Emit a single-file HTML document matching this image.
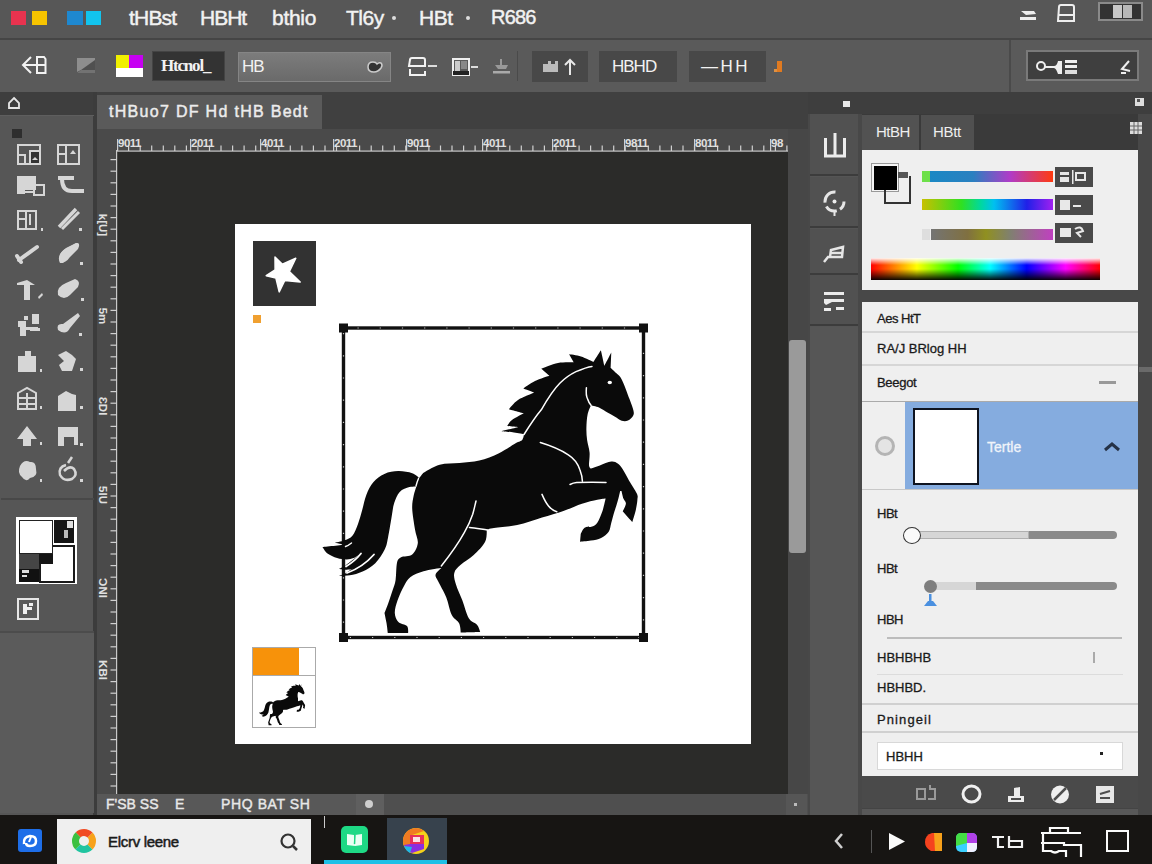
<!DOCTYPE html>
<html><head><meta charset="utf-8">
<style>
*{margin:0;padding:0;box-sizing:border-box}
html,body{width:1152px;height:864px;overflow:hidden;background:#2b2b29;font-family:"Liberation Sans",sans-serif}
.a{position:absolute}
.t{position:absolute;white-space:nowrap;color:#f2f2f2;font-weight:bold}
</style></head><body>
<!-- menu bar -->
<div class="a" style="left:0;top:0;width:1152px;height:39px;background:#575757"></div>
<div class="a" style="left:0;top:38px;width:1152px;height:2px;background:#454545"></div>
<!-- options bar -->
<div class="a" style="left:0;top:40px;width:1152px;height:52px;background:#5a5a5a"></div>

<!-- MENU CONTENT -->
<div class="a" style="left:11px;top:11px;width:15px;height:14px;background:#e8334f"></div>
<div class="a" style="left:32px;top:11px;width:15px;height:14px;background:#f7c400"></div>
<div class="a" style="left:67px;top:11px;width:16px;height:14px;background:#1e88d0"></div>
<div class="a" style="left:86px;top:11px;width:15px;height:14px;background:#12c4ee"></div>
<div class="t" style="left:129px;top:6px;font-size:21px;font-weight:normal;-webkit-text-stroke:0.45px #f2f2f2;letter-spacing:-0.8px">tHBst</div>
<div class="t" style="left:200px;top:6px;font-size:21px;font-weight:normal;-webkit-text-stroke:0.45px #f2f2f2;letter-spacing:-1px">HBHt</div>
<div class="t" style="left:272px;top:6px;font-size:21px;font-weight:normal;-webkit-text-stroke:0.45px #f2f2f2;letter-spacing:-0.3px">bthio</div>
<div class="t" style="left:346px;top:6px;font-size:21px;font-weight:normal;-webkit-text-stroke:0.45px #f2f2f2;letter-spacing:-0.5px">Tl6y</div>
<div class="a" style="left:392px;top:16px;width:4px;height:4px;background:#ddd;border-radius:2px"></div>
<div class="t" style="left:419px;top:6px;font-size:21px;font-weight:normal;-webkit-text-stroke:0.45px #f2f2f2;letter-spacing:-0.5px">HBt</div>
<div class="a" style="left:466px;top:16px;width:4px;height:4px;background:#ddd;border-radius:2px"></div>
<div class="t" style="left:491px;top:6px;font-size:20px;font-weight:normal;-webkit-text-stroke:0.45px #f2f2f2;letter-spacing:-0.8px">R686</div>
<svg class="a" style="left:1018px;top:7px" width="22" height="16"><path d="M3 4 L16 4 L18 7 L8 8 Z" fill="#eee"/><rect x="2" y="10" width="16" height="3" fill="#eee"/></svg>
<svg class="a" style="left:1055px;top:3px" width="24" height="20"><path d="M4 4 Q4 2 6 2 L17 2 Q19 2 19 4 L19 18 L3 18 Z" fill="none" stroke="#eee" stroke-width="2"/><rect x="4" y="11" width="15" height="2" fill="#eee"/></svg>
<div class="a" style="left:1098px;top:2px;width:45px;height:19px;border:2px solid #8a8a8a;background:#333"></div>
<div class="a" style="left:1113px;top:5px;width:9px;height:13px;background:#c8c8c8"></div>
<div class="a" style="left:1123px;top:5px;width:9px;height:13px;background:#b8b8b8"></div>
<!-- OPTIONS CONTENT -->
<svg class="a" style="left:18px;top:54px" width="32" height="22"><path d="M13 3 L5 11 L13 19 M5 11 L27 11" fill="none" stroke="#f2f2f2" stroke-width="2"/><path d="M19 3 L26 3 L27.5 5 L27.5 19 L19 19 Z" fill="none" stroke="#f2f2f2" stroke-width="2"/></svg>
<svg class="a" style="left:74px;top:56px" width="24" height="20"><rect x="3" y="2" width="18" height="15" fill="#505050"/><path d="M3 2 L21 2 L21 4 L7 14 L3 16 Z" fill="#8e8e8e"/><path d="M7 14 L21 14 L21 17 L3 17 Z" fill="#727272"/></svg>
<div class="a" style="left:116px;top:55px;width:13px;height:13px;background:#f0f000"></div>
<div class="a" style="left:129px;top:55px;width:14px;height:13px;background:#c600f2"></div>
<div class="a" style="left:116px;top:68px;width:27px;height:9px;background:#fff"></div>
<div class="a" style="left:152px;top:51px;width:73px;height:30px;background:#333;border:1px solid #444"></div>
<div class="t" style="left:161px;top:56px;font-size:17px;letter-spacing:-1.2px;font-family:'Liberation Serif',serif">Htcnol_</div>
<div class="a" style="left:238px;top:52px;width:153px;height:30px;background:linear-gradient(180deg,#7c7c7c,#6a6a6a);border:1px solid #858585"></div>
<div class="t" style="left:242px;top:57px;font-size:17px;font-weight:normal;letter-spacing:-1px">HB</div>
<svg class="a" style="left:365px;top:58px" width="20" height="18"><path d="M3 9 Q3 4 8 4 Q11 4 12 6 Q14 4 16 5 Q18 7 16 10 Q13 14 9 14 Q3 14 3 9 Z" fill="#333" stroke="#ccc" stroke-width="1.5"/></svg>
<svg class="a" style="left:406px;top:55px" width="34" height="24"><path d="M4 5 Q4 3 6 3 L17 3 Q19 3 19 5 L19 11 L3 11 Z" fill="none" stroke="#f2f2f2" stroke-width="2"/><path d="M4 14 L4 20 L19 20 L19 16" fill="none" stroke="#f2f2f2" stroke-width="2"/><rect x="22" y="10" width="9" height="2" fill="#ddd"/></svg>
<svg class="a" style="left:451px;top:57px" width="30" height="22"><rect x="2" y="2" width="16" height="16" fill="none" stroke="#eee" stroke-width="2"/><rect x="4" y="4" width="5" height="10" fill="#ccc"/><rect x="10" y="4" width="6" height="8" fill="#888"/><rect x="2" y="14" width="16" height="4" fill="#222"/><rect x="20" y="9" width="7" height="2" fill="#ddd"/></svg>
<svg class="a" style="left:490px;top:57px" width="24" height="20"><path d="M10 2 L10 8 L5 8 L8 12 L16 12 L18 8 L12 8 L12 2 Z" fill="#999"/><rect x="3" y="14" width="17" height="2.5" fill="#aaa"/></svg>
<div class="a" style="left:517px;top:51px;width:1px;height:30px;background:#4a4a4a"></div>
<div class="a" style="left:532px;top:51px;width:56px;height:31px;background:#484848"></div>
<svg class="a" style="left:540px;top:56px" width="44" height="22"><path d="M3 8 L8 8 L8 5 L11 5 L11 8 L15 8 L15 5 L18 5 L18 16 L3 16 Z" fill="#bbb"/><path d="M30 4 L30 19 M25 9 L30 4 L35 9" fill="none" stroke="#e8e8e8" stroke-width="2"/></svg>
<div class="a" style="left:599px;top:51px;width:78px;height:31px;background:#484848"></div>
<div class="t" style="left:612px;top:57px;font-size:17px;font-weight:normal;letter-spacing:-1px">HBHD</div>
<div class="a" style="left:689px;top:51px;width:77px;height:31px;background:#484848"></div>
<div class="t" style="left:701px;top:57px;font-size:17px;font-weight:normal;letter-spacing:2.5px">&#8212;HH</div>
<svg class="a" style="left:772px;top:58px" width="14" height="18"><rect x="5" y="3" width="5" height="11" fill="#e07a20"/><rect x="2" y="11" width="3" height="3" fill="#e09040"/></svg>
<div class="a" style="left:1009px;top:40px;width:2px;height:52px;background:#4a4a4a"></div>
<div class="a" style="left:1026px;top:50px;width:113px;height:31px;background:#3f3f3f;border:2px solid #7a7a7a"></div>
<svg class="a" style="left:1034px;top:56px" width="50" height="22"><circle cx="7" cy="10" r="4" fill="none" stroke="#eee" stroke-width="2"/><path d="M11 10 L20 10 Q23 10 24 5 L28 5 L28 18 L24 18 Q22 12 20 12 L11 12" fill="#eee"/><rect x="31" y="4" width="12" height="3" fill="#eee"/><rect x="31" y="9" width="12" height="3" fill="#eee"/><rect x="31" y="14" width="12" height="4" fill="#ddd"/></svg>
<svg class="a" style="left:1117px;top:58px" width="16" height="18"><path d="M12 3 L5 11 L13 13 M4 15 L9 15" fill="none" stroke="#eee" stroke-width="2"/></svg>
<!-- dark strip under options -->
<div class="a" style="left:0;top:92px;width:1152px;height:23px;background:#3e3e3e"></div>
<!-- left tool panel -->
<div class="a" style="left:0;top:115px;width:94px;height:700px;background:#565656"></div>
<div class="a" style="left:93px;top:92px;width:4px;height:723px;background:#3c3c3c"></div>
<div class="a" style="left:97px;top:92px;width:711px;height:37px;background:#404040"></div>

<!-- LEFT PANEL CONTENT -->
<svg class="a" style="left:6px;top:96px" width="16" height="16"><path d="M8 2 L13 7 L13 12 L3 12 L3 7 Z" fill="none" stroke="#e6e6e6" stroke-width="1.8"/></svg>
<div class="a" style="left:0;top:115px;width:94px;height:1px;background:#5e5e5e"></div>
<div class="a" style="left:12px;top:129px;width:10px;height:9px;background:#2e2e2e"></div>
<svg class="a" style="left:0;top:115px" width="94" height="385">
<g fill="none" stroke="#d6d6d6" stroke-width="2">
 <rect x="18" y="30" width="22" height="19"/><rect x="30" y="36" width="10" height="13" fill="#333"/><path d="M18 40 L25 40 L25 49"/>
 <rect x="58" y="30" width="21" height="19"/><path d="M58 39 L66 39 M66 30 L66 49"/>
</g>
<path d="M35 42 L38 45 L32 45 Z" fill="#d6d6d6"/><path d="M73 35 L76 39 L70 39 Z" fill="#d6d6d6"/>
<g fill="#d6d6d6">
 <rect x="17" y="61" width="19" height="14"/><rect x="17" y="73" width="8" height="6"/>
</g>
<g fill="none" stroke="#d6d6d6" stroke-width="2">
 <rect x="34" y="70" width="10" height="10"/><path d="M24 77 L34 77"/>
 <path d="M58 63 L74 63 M62 64 Q62 76 72 76 L84 76" stroke-width="4"/>
</g>
<g fill="none" stroke="#d6d6d6" stroke-width="2">
 <rect x="18" y="96" width="18" height="18"/><path d="M18 104 L26 104 M26 96 L26 114 M30 99 L30 110"/>
 <path d="M59 112 L76 94" stroke-width="3.5"/><path d="M62 114 L79 97" stroke-width="3"/>
</g>
<rect x="41" y="113" width="2" height="3" fill="#d6d6d6"/><rect x="79" y="113" width="3" height="3" fill="#d6d6d6"/>
<g fill="none" stroke="#d6d6d6" stroke-width="4" stroke-linecap="round">
 <path d="M19 145 L37 132"/><path d="M17 141 L21 147"/>
 <path d="M62 146 Q60 140 66 136 L77 130"/>
</g>
<path d="M60 148 Q56 140 66 133 L76 128 Q81 128 78 134 L70 142 Q66 148 60 148 Z" fill="#d6d6d6"/>
<rect x="80" y="147" width="3" height="3" fill="#d6d6d6"/>
<g fill="#d6d6d6">
 <path d="M17 168 L27 165 L35 170 L30 170 L30 185 L24 185 L24 170 L17 170 Z"/>
 <path d="M58 180 Q56 172 66 168 L75 164 Q81 166 78 172 L70 180 Q64 186 58 180 Z"/>
 <path d="M38 182 L42 178 L43 180 L39 184 Z"/>
 <rect x="81" y="183" width="3" height="3"/>
</g>
<g fill="#d6d6d6">
 <rect x="18" y="206" width="8" height="6"/><rect x="24" y="201" width="4" height="4"/><rect x="32" y="199" width="7" height="10"/><rect x="20" y="212" width="18" height="3"/><rect x="20" y="215" width="6" height="6"/><rect x="30" y="213" width="10" height="3"/>
 <path d="M58 215 Q56 208 63 209 L78 198 L80 201 L70 213 Q66 221 58 215 Z"/><rect x="79" y="218" width="3" height="3"/>
</g>
<g fill="#d6d6d6">
 <rect x="18" y="241" width="18" height="16"/><rect x="25" y="236" width="6" height="5"/><rect x="40" y="254" width="2" height="3"/>
 <path d="M58 240 L66 236 L72 240 L76 244 L72 256 L62 256 L59 250 L64 246 Z"/><rect x="80" y="253" width="3" height="3"/>
</g>
<g fill="none" stroke="#d6d6d6" stroke-width="2">
 <path d="M18 278 L18 294 L36 294 L36 278 L27 273 Z M18 283 L36 283 M18 289 L36 289 M27 278 L27 294"/>
</g>
<g fill="#d6d6d6">
 <path d="M58 281 L66 276 L72 279 L76 280 L76 296 L58 296 Z"/><rect x="40" y="291" width="2" height="3"/><rect x="80" y="291" width="3" height="3"/>
 <path d="M17 324 L27 311 L37 324 L31 324 L31 331 L23 331 L23 324 Z"/><rect x="40" y="327" width="2" height="3"/>
 <path d="M58 312 L78 312 L78 330 L74 330 L74 322 L64 322 L64 331 L58 331 Z"/><rect x="80" y="328" width="3" height="3"/>
 <path d="M20 351 Q24 344 30 347 Q36 346 36 354 Q38 362 30 363 Q26 368 22 362 Q17 358 20 351 Z"/><rect x="40" y="364" width="2" height="3"/>
</g>
<g fill="none" stroke="#d6d6d6" stroke-width="2.5">
 <path d="M66 350 Q58 352 60 360 Q64 367 72 364 Q78 360 74 354 Q70 350 64 356"/><path d="M68 348 L72 342"/>
</g>
<rect x="80" y="364" width="3" height="3" fill="#d6d6d6"/>
</svg>
<div class="a" style="left:1px;top:498px;width:93px;height:2px;background:#484848"></div>
<div class="a" style="left:16px;top:517px;width:61px;height:67px;background:#fff"></div>
<div class="a" style="left:39px;top:545px;width:36px;height:38px;border:2px solid #1a1a1a;background:#fff"></div>
<div class="a" style="left:19px;top:520px;width:34px;height:34px;background:#fff;border:1.5px solid #222"></div>
<div class="a" style="left:54px;top:520px;width:20px;height:23px;background:#151515"></div>
<div class="a" style="left:67px;top:521px;width:6px;height:7px;background:#ddd"></div>
<div class="a" style="left:64px;top:530px;width:4px;height:8px;background:#bbb"></div>
<div class="a" style="left:19px;top:554px;width:20px;height:15px;background:#454545"></div>
<div class="a" style="left:19px;top:569px;width:20px;height:13px;background:#111"></div>
<div class="a" style="left:22px;top:570px;width:7px;height:3px;background:#ddd"></div>
<div class="a" style="left:22px;top:575px;width:5px;height:2px;background:#ddd"></div>
<div class="a" style="left:39px;top:554px;width:14px;height:10px;background:#151515"></div>
<div class="a" style="left:17px;top:598px;width:22px;height:22px;border:2px solid #e6e6e6;background:#5a5a5a"></div>
<svg class="a" style="left:17px;top:598px" width="22" height="22"><path d="M6 6 L10 6 L10 9 L15 9 L15 12 L10 12 L10 16 L6 16 Z M12 5 L16 5 L16 8 L12 8 Z" fill="#f0f0f0"/></svg>
<div class="a" style="left:0;top:631px;width:94px;height:2px;background:#4c4c4c"></div>
<div class="a" style="left:0;top:633px;width:94px;height:180px;background:#5b5b5b"></div>
<!-- document tab -->
<div class="a" style="left:97px;top:95px;width:225px;height:34px;background:#5a5a5a"></div>
<div class="t" style="left:109px;top:103px;font-size:16px;letter-spacing:1.3px;color:#ececec;font-weight:normal;-webkit-text-stroke:0.45px #ececec">tHBuo7 DF Hd tHB Bedt</div>
<!-- ruler -->
<div class="a" style="left:97px;top:129px;width:708px;height:22px;background:#4a4a4a"></div>
<div class="a" style="left:97px;top:129px;width:20px;height:665px;background:#4a4a4a"></div>
<!-- canvas -->
<div class="a" style="left:117px;top:151px;width:671px;height:643px;background:#2b2b29"></div>
<svg class="a" style="left:0;top:0" width="1152" height="864">
<rect x="116" y="150.5" width="672" height="1.2" fill="#c8c8c8"/>
<rect x="116" y="150" width="1.2" height="644" fill="#c8c8c8"/>
<rect x="110.5" y="159.0" width="6.5" height="1.2" fill="#d0d0d0"/>
<rect x="110.5" y="170.6" width="6.5" height="1.2" fill="#d0d0d0"/>
<rect x="110.5" y="182.2" width="6.5" height="1.2" fill="#d0d0d0"/>
<rect x="110.5" y="193.8" width="6.5" height="1.2" fill="#d0d0d0"/>
<rect x="110.5" y="205.4" width="6.5" height="1.2" fill="#d0d0d0"/>
<rect x="110.5" y="217.0" width="6.5" height="1.2" fill="#d0d0d0"/>
<rect x="110.5" y="228.6" width="6.5" height="1.2" fill="#d0d0d0"/>
<rect x="110.5" y="240.2" width="6.5" height="1.2" fill="#d0d0d0"/>
<rect x="110.5" y="251.8" width="6.5" height="1.2" fill="#d0d0d0"/>
<rect x="110.5" y="263.4" width="6.5" height="1.2" fill="#d0d0d0"/>
<rect x="110.5" y="275.0" width="6.5" height="1.2" fill="#d0d0d0"/>
<rect x="110.5" y="286.6" width="6.5" height="1.2" fill="#d0d0d0"/>
<rect x="110.5" y="298.2" width="6.5" height="1.2" fill="#d0d0d0"/>
<rect x="110.5" y="309.8" width="6.5" height="1.2" fill="#d0d0d0"/>
<rect x="110.5" y="321.4" width="6.5" height="1.2" fill="#d0d0d0"/>
<rect x="110.5" y="333.0" width="6.5" height="1.2" fill="#d0d0d0"/>
<rect x="110.5" y="344.6" width="6.5" height="1.2" fill="#d0d0d0"/>
<rect x="110.5" y="356.2" width="6.5" height="1.2" fill="#d0d0d0"/>
<rect x="110.5" y="367.8" width="6.5" height="1.2" fill="#d0d0d0"/>
<rect x="110.5" y="379.4" width="6.5" height="1.2" fill="#d0d0d0"/>
<rect x="110.5" y="391.0" width="6.5" height="1.2" fill="#d0d0d0"/>
<rect x="110.5" y="402.6" width="6.5" height="1.2" fill="#d0d0d0"/>
<rect x="110.5" y="414.2" width="6.5" height="1.2" fill="#d0d0d0"/>
<rect x="110.5" y="425.8" width="6.5" height="1.2" fill="#d0d0d0"/>
<rect x="110.5" y="437.4" width="6.5" height="1.2" fill="#d0d0d0"/>
<rect x="110.5" y="449.0" width="6.5" height="1.2" fill="#d0d0d0"/>
<rect x="110.5" y="460.6" width="6.5" height="1.2" fill="#d0d0d0"/>
<rect x="110.5" y="472.2" width="6.5" height="1.2" fill="#d0d0d0"/>
<rect x="110.5" y="483.8" width="6.5" height="1.2" fill="#d0d0d0"/>
<rect x="110.5" y="495.4" width="6.5" height="1.2" fill="#d0d0d0"/>
<rect x="110.5" y="507.0" width="6.5" height="1.2" fill="#d0d0d0"/>
<rect x="110.5" y="518.6" width="6.5" height="1.2" fill="#d0d0d0"/>
<rect x="110.5" y="530.2" width="6.5" height="1.2" fill="#d0d0d0"/>
<rect x="110.5" y="541.8" width="6.5" height="1.2" fill="#d0d0d0"/>
<rect x="110.5" y="553.4" width="6.5" height="1.2" fill="#d0d0d0"/>
<rect x="110.5" y="565.0" width="6.5" height="1.2" fill="#d0d0d0"/>
<rect x="110.5" y="576.6" width="6.5" height="1.2" fill="#d0d0d0"/>
<rect x="110.5" y="588.2" width="6.5" height="1.2" fill="#d0d0d0"/>
<rect x="110.5" y="599.8" width="6.5" height="1.2" fill="#d0d0d0"/>
<rect x="110.5" y="611.4" width="6.5" height="1.2" fill="#d0d0d0"/>
<rect x="110.5" y="623.0" width="6.5" height="1.2" fill="#d0d0d0"/>
<rect x="110.5" y="634.6" width="6.5" height="1.2" fill="#d0d0d0"/>
<rect x="110.5" y="646.2" width="6.5" height="1.2" fill="#d0d0d0"/>
<rect x="110.5" y="657.8" width="6.5" height="1.2" fill="#d0d0d0"/>
<rect x="110.5" y="669.4" width="6.5" height="1.2" fill="#d0d0d0"/>
<rect x="110.5" y="681.0" width="6.5" height="1.2" fill="#d0d0d0"/>
<rect x="110.5" y="692.6" width="6.5" height="1.2" fill="#d0d0d0"/>
<rect x="110.5" y="704.2" width="6.5" height="1.2" fill="#d0d0d0"/>
<rect x="110.5" y="715.8" width="6.5" height="1.2" fill="#d0d0d0"/>
<rect x="110.5" y="727.4" width="6.5" height="1.2" fill="#d0d0d0"/>
<rect x="110.5" y="739.0" width="6.5" height="1.2" fill="#d0d0d0"/>
<rect x="110.5" y="750.6" width="6.5" height="1.2" fill="#d0d0d0"/>
<rect x="110.5" y="762.2" width="6.5" height="1.2" fill="#d0d0d0"/>
<rect x="110.5" y="773.8" width="6.5" height="1.2" fill="#d0d0d0"/>
<rect x="110.5" y="785.4" width="6.5" height="1.2" fill="#d0d0d0"/>
<text transform="translate(99,225) rotate(90)" text-anchor="middle" font-family="Liberation Sans" font-size="11.5" font-weight="bold" fill="#e0e0e0">k[U]</text>
<text transform="translate(99,316) rotate(90)" text-anchor="middle" font-family="Liberation Sans" font-size="11.5" font-weight="bold" fill="#e0e0e0">5m</text>
<text transform="translate(99,406) rotate(90)" text-anchor="middle" font-family="Liberation Sans" font-size="11.5" font-weight="bold" fill="#e0e0e0">ƐDI</text>
<text transform="translate(99,495) rotate(90)" text-anchor="middle" font-family="Liberation Sans" font-size="11.5" font-weight="bold" fill="#e0e0e0">5lU</text>
<text transform="translate(99,588) rotate(90)" text-anchor="middle" font-family="Liberation Sans" font-size="11.5" font-weight="bold" fill="#e0e0e0">ƆNI</text>
<text transform="translate(99,670) rotate(90)" text-anchor="middle" font-family="Liberation Sans" font-size="11.5" font-weight="bold" fill="#e0e0e0">KBI</text>
<rect x="128.0" y="145.5" width="1.2" height="5.5" fill="#d0d0d0"/>
<rect x="139.6" y="145.5" width="1.2" height="5.5" fill="#d0d0d0"/>
<rect x="151.1" y="145.5" width="1.2" height="5.5" fill="#d0d0d0"/>
<rect x="162.7" y="145.5" width="1.2" height="5.5" fill="#d0d0d0"/>
<rect x="174.2" y="145.5" width="1.2" height="5.5" fill="#d0d0d0"/>
<rect x="185.8" y="145.5" width="1.2" height="5.5" fill="#d0d0d0"/>
<rect x="197.3" y="145.5" width="1.2" height="5.5" fill="#d0d0d0"/>
<rect x="208.9" y="145.5" width="1.2" height="5.5" fill="#d0d0d0"/>
<rect x="220.4" y="145.5" width="1.2" height="5.5" fill="#d0d0d0"/>
<rect x="232.0" y="145.5" width="1.2" height="5.5" fill="#d0d0d0"/>
<rect x="243.5" y="145.5" width="1.2" height="5.5" fill="#d0d0d0"/>
<rect x="255.1" y="145.5" width="1.2" height="5.5" fill="#d0d0d0"/>
<rect x="266.6" y="145.5" width="1.2" height="5.5" fill="#d0d0d0"/>
<rect x="278.2" y="145.5" width="1.2" height="5.5" fill="#d0d0d0"/>
<rect x="289.7" y="145.5" width="1.2" height="5.5" fill="#d0d0d0"/>
<rect x="301.3" y="145.5" width="1.2" height="5.5" fill="#d0d0d0"/>
<rect x="312.8" y="145.5" width="1.2" height="5.5" fill="#d0d0d0"/>
<rect x="324.4" y="145.5" width="1.2" height="5.5" fill="#d0d0d0"/>
<rect x="335.9" y="145.5" width="1.2" height="5.5" fill="#d0d0d0"/>
<rect x="347.5" y="145.5" width="1.2" height="5.5" fill="#d0d0d0"/>
<rect x="359.0" y="145.5" width="1.2" height="5.5" fill="#d0d0d0"/>
<rect x="370.6" y="145.5" width="1.2" height="5.5" fill="#d0d0d0"/>
<rect x="382.1" y="145.5" width="1.2" height="5.5" fill="#d0d0d0"/>
<rect x="393.7" y="145.5" width="1.2" height="5.5" fill="#d0d0d0"/>
<rect x="405.2" y="145.5" width="1.2" height="5.5" fill="#d0d0d0"/>
<rect x="416.8" y="145.5" width="1.2" height="5.5" fill="#d0d0d0"/>
<rect x="428.3" y="145.5" width="1.2" height="5.5" fill="#d0d0d0"/>
<rect x="439.9" y="145.5" width="1.2" height="5.5" fill="#d0d0d0"/>
<rect x="451.4" y="145.5" width="1.2" height="5.5" fill="#d0d0d0"/>
<rect x="463.0" y="145.5" width="1.2" height="5.5" fill="#d0d0d0"/>
<rect x="474.5" y="145.5" width="1.2" height="5.5" fill="#d0d0d0"/>
<rect x="486.1" y="145.5" width="1.2" height="5.5" fill="#d0d0d0"/>
<rect x="497.6" y="145.5" width="1.2" height="5.5" fill="#d0d0d0"/>
<rect x="509.2" y="145.5" width="1.2" height="5.5" fill="#d0d0d0"/>
<rect x="520.7" y="145.5" width="1.2" height="5.5" fill="#d0d0d0"/>
<rect x="532.3" y="145.5" width="1.2" height="5.5" fill="#d0d0d0"/>
<rect x="543.8" y="145.5" width="1.2" height="5.5" fill="#d0d0d0"/>
<rect x="555.4" y="145.5" width="1.2" height="5.5" fill="#d0d0d0"/>
<rect x="566.9" y="145.5" width="1.2" height="5.5" fill="#d0d0d0"/>
<rect x="578.5" y="145.5" width="1.2" height="5.5" fill="#d0d0d0"/>
<rect x="590.0" y="145.5" width="1.2" height="5.5" fill="#d0d0d0"/>
<rect x="601.6" y="145.5" width="1.2" height="5.5" fill="#d0d0d0"/>
<rect x="613.1" y="145.5" width="1.2" height="5.5" fill="#d0d0d0"/>
<rect x="624.6" y="145.5" width="1.2" height="5.5" fill="#d0d0d0"/>
<rect x="636.2" y="145.5" width="1.2" height="5.5" fill="#d0d0d0"/>
<rect x="647.7" y="145.5" width="1.2" height="5.5" fill="#d0d0d0"/>
<rect x="659.3" y="145.5" width="1.2" height="5.5" fill="#d0d0d0"/>
<rect x="670.8" y="145.5" width="1.2" height="5.5" fill="#d0d0d0"/>
<rect x="682.4" y="145.5" width="1.2" height="5.5" fill="#d0d0d0"/>
<rect x="693.9" y="145.5" width="1.2" height="5.5" fill="#d0d0d0"/>
<rect x="705.5" y="145.5" width="1.2" height="5.5" fill="#d0d0d0"/>
<rect x="717.0" y="145.5" width="1.2" height="5.5" fill="#d0d0d0"/>
<rect x="728.6" y="145.5" width="1.2" height="5.5" fill="#d0d0d0"/>
<rect x="740.1" y="145.5" width="1.2" height="5.5" fill="#d0d0d0"/>
<rect x="751.7" y="145.5" width="1.2" height="5.5" fill="#d0d0d0"/>
<rect x="763.2" y="145.5" width="1.2" height="5.5" fill="#d0d0d0"/>
<rect x="774.8" y="145.5" width="1.2" height="5.5" fill="#d0d0d0"/>
<rect x="786.3" y="145.5" width="1.2" height="5.5" fill="#d0d0d0"/>
<rect x="117" y="139" width="1.2" height="12" fill="#d0d0d0"/>
<text x="118" y="147" font-family="Liberation Sans" font-size="11.5" font-weight="bold" fill="#e0e0e0" letter-spacing="-0.5">9011</text>
<rect x="190" y="139" width="1.2" height="12" fill="#d0d0d0"/>
<text x="191" y="147" font-family="Liberation Sans" font-size="11.5" font-weight="bold" fill="#e0e0e0" letter-spacing="-0.5">2011</text>
<rect x="260" y="139" width="1.2" height="12" fill="#d0d0d0"/>
<text x="261" y="147" font-family="Liberation Sans" font-size="11.5" font-weight="bold" fill="#e0e0e0" letter-spacing="-0.5">4011</text>
<rect x="333" y="139" width="1.2" height="12" fill="#d0d0d0"/>
<text x="334" y="147" font-family="Liberation Sans" font-size="11.5" font-weight="bold" fill="#e0e0e0" letter-spacing="-0.5">2011</text>
<rect x="406" y="139" width="1.2" height="12" fill="#d0d0d0"/>
<text x="407" y="147" font-family="Liberation Sans" font-size="11.5" font-weight="bold" fill="#e0e0e0" letter-spacing="-0.5">9011</text>
<rect x="482" y="139" width="1.2" height="12" fill="#d0d0d0"/>
<text x="483" y="147" font-family="Liberation Sans" font-size="11.5" font-weight="bold" fill="#e0e0e0" letter-spacing="-0.5">4011</text>
<rect x="552" y="139" width="1.2" height="12" fill="#d0d0d0"/>
<text x="553" y="147" font-family="Liberation Sans" font-size="11.5" font-weight="bold" fill="#e0e0e0" letter-spacing="-0.5">2011</text>
<rect x="624" y="139" width="1.2" height="12" fill="#d0d0d0"/>
<text x="625" y="147" font-family="Liberation Sans" font-size="11.5" font-weight="bold" fill="#e0e0e0" letter-spacing="-0.5">9811</text>
<rect x="694" y="139" width="1.2" height="12" fill="#d0d0d0"/>
<text x="695" y="147" font-family="Liberation Sans" font-size="11.5" font-weight="bold" fill="#e0e0e0" letter-spacing="-0.5">8011</text>
<rect x="770" y="139" width="1.2" height="12" fill="#d0d0d0"/>
<text x="771" y="147" font-family="Liberation Sans" font-size="11.5" font-weight="bold" fill="#e0e0e0" letter-spacing="-0.5">98</text>
</svg>
<!-- scrollbar -->
<div class="a" style="left:788px;top:129px;width:20px;height:686px;background:#474747"></div>
<div class="a" style="left:789px;top:340px;width:17px;height:213px;background:#9a9a9a;border-radius:3px"></div>
<!-- status bar -->
<div class="a" style="left:97px;top:794px;width:711px;height:22px;background:#4f4f4f"></div>
<div class="a" style="left:97px;top:794px;width:259px;height:22px;background:#585858"></div>
<div class="a" style="left:356px;top:794px;width:28px;height:22px;background:#5f5f5f"></div>
<div class="a" style="left:365px;top:800px;width:8px;height:8px;background:#cfcfcf;border-radius:50%"></div>
<div class="a" style="left:786px;top:794px;width:21px;height:22px;background:#565656"></div>
<div class="a" style="left:794px;top:803px;width:3px;height:3px;background:#bbb"></div>
<div class="t" style="left:106px;top:796px;font-size:14px;color:#e8e8e8;font-weight:normal;-webkit-text-stroke:0.4px #e8e8e8;letter-spacing:0px">F'SB SS</div>
<div class="t" style="left:175px;top:796px;font-size:14px;color:#e8e8e8;font-weight:normal;-webkit-text-stroke:0.4px #e8e8e8">E</div>
<div class="t" style="left:221px;top:796px;font-size:14px;color:#e8e8e8;font-weight:normal;-webkit-text-stroke:0.4px #e8e8e8;letter-spacing:0.6px">PHQ BAT SH</div>
<!-- right area -->
<div class="a" style="left:808px;top:92px;width:344px;height:724px;background:#484848"></div>
<div class="a" style="left:808px;top:92px;width:344px;height:22px;background:#3e3e3e"></div>
<div class="a" style="left:810px;top:114px;width:48px;height:702px;background:#555"></div>
<div class="a" style="left:862px;top:114px;width:276px;height:36px;background:#3a3a3a"></div>
<div class="a" style="left:862px;top:150px;width:276px;height:140px;background:#efefef"></div>
<div class="a" style="left:862px;top:302px;width:276px;height:474px;background:#efefef"></div>
<div class="a" style="left:862px;top:776px;width:276px;height:36px;background:#4a4a4a"></div>

<!-- RIGHT PANEL CONTENT -->
<div class="a" style="left:843px;top:101px;width:7px;height:6px;background:#e8e8e8"></div>
<svg class="a" style="left:1133px;top:96px" width="14" height="12"><rect x="2" y="2" width="9" height="8" fill="#ddd"/><rect x="4" y="3" width="3" height="3" fill="#555"/></svg>
<!-- icon panel buttons -->
<div class="a" style="left:810px;top:114px;width:48px;height:62px;background:#515151;border-bottom:2px solid #3c3c3c"></div>
<div class="a" style="left:810px;top:177px;width:48px;height:51px;background:#515151;border-bottom:2px solid #3c3c3c"></div>
<div class="a" style="left:810px;top:229px;width:48px;height:46px;background:#515151;border-bottom:2px solid #3c3c3c"></div>
<div class="a" style="left:810px;top:275px;width:48px;height:51px;background:#515151;border-bottom:2px solid #3c3c3c"></div>
<div class="a" style="left:810px;top:327px;width:48px;height:489px;background:#565656"></div>
<svg class="a" style="left:810px;top:114px" width="48" height="212">
<g fill="none" stroke="#ececec" stroke-width="3">
<path d="M15.5 24 L15.5 42 L34.5 42 L34.5 24 M25 19 L25 42"/>
</g>
<circle cx="24.5" cy="87.5" r="9.5" fill="none" stroke="#e6e6e6" stroke-width="3" stroke-dasharray="9 3.5 12 4 17 14"/>
<circle cx="24.5" cy="87.5" r="2" fill="#eee"/>
<path d="M24.5 97 L24.5 102" stroke="#e6e6e6" stroke-width="2"/>
<g fill="none" stroke="#e6e6e6" stroke-width="2.5">
<path d="M14 148 L18 143 L32 143 L33 133 L21 136 L20 143 M21 139 L32 139"/>
</g>
<g fill="#ececec">
<rect x="14" y="178" width="20" height="3"/><path d="M14 185 L34 185 L34 188 L22 188 L16 191 L14 189 Z"/><rect x="14" y="194" width="7" height="3"/><rect x="26" y="193" width="8" height="3"/>
</g>
</svg>
<!-- tabs -->
<div class="a" style="left:862px;top:115px;width:57px;height:35px;background:#525252"></div>
<div class="a" style="left:921px;top:115px;width:53px;height:35px;background:#505050"></div>
<div class="t" style="left:876px;top:123px;font-size:15px;letter-spacing:-0.5px;color:#eee;font-weight:normal">HtBH</div>
<div class="t" style="left:933px;top:123px;font-size:15px;letter-spacing:-0.3px;color:#eee;font-weight:normal">HBtt</div>
<svg class="a" style="left:1128px;top:120px" width="16" height="16"><rect x="2" y="2" width="12" height="12" fill="#ddd"/><path d="M2 6 L14 6 M2 10 L14 10 M6 2 L6 14 M10 2 L10 14" stroke="#666" stroke-width="1"/></svg>
<!-- color panel -->
<div class="a" style="left:871px;top:163px;width:28px;height:29px;background:#f4f4f4;border:1px solid #999"></div>
<div class="a" style="left:874px;top:166px;width:23px;height:24px;background:#000"></div>
<svg class="a" style="left:880px;top:168px" width="36" height="40"><path d="M5 22 L5 35 L30 35 L30 8" fill="none" stroke="#333" stroke-width="2"/><rect x="18" y="4" width="10" height="6" fill="#555"/></svg>
<div class="a" style="left:922px;top:171px;width:8px;height:11px;background:#6ee04a"></div>
<div class="a" style="left:930px;top:171px;width:123px;height:11px;background:linear-gradient(90deg,#1a88c4 0%,#2a80c0 35%,#b03cc8 65%,#ff3a10 100%)"></div>
<div class="a" style="left:922px;top:199px;width:131px;height:11px;background:linear-gradient(90deg,#c8c000 0%,#30e020 30%,#00d8a0 45%,#00c0f0 55%,#2020e8 80%,#a020f0 100%)"></div>
<div class="a" style="left:922px;top:229px;width:8px;height:11px;background:#dedede"></div>
<div class="a" style="left:931px;top:229px;width:122px;height:11px;background:linear-gradient(90deg,#747474 0%,#807040 30%,#909020 45%,#808070 65%,#c040c0 100%)"></div>
<div class="a" style="left:1055px;top:167px;width:38px;height:20px;background:#4a4a4a"></div>
<div class="a" style="left:1055px;top:195px;width:38px;height:20px;background:#4a4a4a"></div>
<div class="a" style="left:1055px;top:223px;width:38px;height:20px;background:#4a4a4a"></div>
<svg class="a" style="left:1055px;top:167px" width="38" height="76">
<g fill="#e8e8e8"><rect x="5" y="5" width="9" height="3"/><rect x="5" y="10" width="9" height="5"/><rect x="17" y="3" width="1.5" height="14"/><path d="M21 6 L30 6 L30 13 L21 13 Z" fill="none" stroke="#e8e8e8" stroke-width="2"/></g>
<g fill="#e8e8e8"><rect x="5" y="33" width="10" height="10"/><rect x="18" y="38" width="8" height="2"/></g>
<g fill="#e8e8e8"><rect x="5" y="61" width="11" height="9"/><path d="M20 62 Q26 58 28 64 L22 66 L26 70" fill="none" stroke="#e8e8e8" stroke-width="2"/></g>
</svg>
<div class="a" style="left:871px;top:258px;width:229px;height:22px;background:linear-gradient(180deg,rgba(255,255,255,0.95) 0%,rgba(255,255,255,0) 32%,rgba(0,0,0,0) 50%,rgba(0,0,0,0.95) 100%),linear-gradient(90deg,#ff0000 0%,#ffff00 20%,#00ff00 38%,#00ffff 52%,#0000ff 68%,#ff00ff 85%,#ff0000 100%)"></div>
<div class="a" style="left:1139px;top:367px;width:13px;height:5px;background:#6a6a6a"></div>
<!-- layers -->
<div class="t" style="left:877px;top:311px;font-size:13px;color:#1a1a1a;font-weight:normal;-webkit-text-stroke:0.3px #1a1a1a;letter-spacing:-0.5px">Aes HtT</div>
<div class="a" style="left:862px;top:331px;width:276px;height:2px;background:#d6d6d6"></div>
<div class="t" style="left:877px;top:341px;font-size:13px;color:#1a1a1a;font-weight:normal;-webkit-text-stroke:0.3px #1a1a1a;letter-spacing:0px">RA/J BRlog HH</div>
<div class="a" style="left:862px;top:364px;width:276px;height:2px;background:#d6d6d6"></div>
<div class="t" style="left:877px;top:375px;font-size:13px;color:#1a1a1a;font-weight:normal;-webkit-text-stroke:0.3px #1a1a1a;letter-spacing:-0.3px">Beegot</div>
<div class="a" style="left:1099px;top:381px;width:17px;height:3px;background:#999"></div>
<div class="a" style="left:862px;top:401px;width:276px;height:1px;background:#aaa"></div>
<div class="a" style="left:905px;top:402px;width:233px;height:87px;background:#85acdf"></div>
<div class="a" style="left:875px;top:436px;width:20px;height:20px;border:3.5px solid #b4b4b4;border-radius:50%;background:#e4e4e4"></div>
<div class="a" style="left:913px;top:408px;width:66px;height:77px;background:#fff;border:2px solid #0f1420"></div>
<div class="t" style="left:987px;top:439px;font-size:14px;color:#f0f4fa;font-weight:normal;-webkit-text-stroke:0.3px #f0f4fa;letter-spacing:0px">Tertle</div>
<svg class="a" style="left:1102px;top:440px" width="20" height="12"><path d="M3 10 L10 4 L17 10" fill="none" stroke="#253247" stroke-width="3"/></svg>
<div class="a" style="left:862px;top:489px;width:276px;height:1px;background:#c8c8c8"></div>
<div class="t" style="left:877px;top:506px;font-size:13px;color:#1a1a1a;font-weight:normal;-webkit-text-stroke:0.3px #1a1a1a;letter-spacing:-0.5px">HBt</div>
<div class="a" style="left:912px;top:531px;width:205px;height:8px;background:#8a8a8a;border-radius:4px"></div>
<div class="a" style="left:912px;top:531px;width:117px;height:8px;background:#d6d6d6;border:1px solid #b0b0b0"></div>
<div class="a" style="left:903px;top:527px;width:18px;height:17px;background:#fafafa;border:1.5px solid #333;border-radius:50%"></div>
<div class="t" style="left:877px;top:561px;font-size:13px;color:#1a1a1a;font-weight:normal;-webkit-text-stroke:0.3px #1a1a1a;letter-spacing:-0.5px">HBt</div>
<div class="a" style="left:930px;top:582px;width:187px;height:8px;background:#8a8a8a;border-radius:4px"></div>
<div class="a" style="left:930px;top:582px;width:46px;height:8px;background:#d6d6d6"></div>
<div class="a" style="left:924px;top:580px;width:13px;height:13px;background:#7e7e7e;border-radius:50%"></div>
<svg class="a" style="left:920px;top:593px" width="22" height="16"><rect x="9" y="1" width="2.5" height="8" fill="#4a90e0"/><path d="M4 13 L8 8 L13 8 L17 13 Z" fill="#4a90e0"/></svg>
<div class="t" style="left:877px;top:612px;font-size:13px;color:#1a1a1a;font-weight:normal;-webkit-text-stroke:0.3px #1a1a1a;letter-spacing:-0.5px">HBH</div>
<div class="a" style="left:887px;top:637px;width:235px;height:1.5px;background:#bcbcbc"></div>
<div class="t" style="left:877px;top:650px;font-size:13px;color:#1a1a1a;font-weight:normal;-webkit-text-stroke:0.3px #1a1a1a;letter-spacing:0px">HBHBHB</div>
<div class="a" style="left:1093px;top:652px;width:2px;height:11px;background:#aaa"></div>
<div class="a" style="left:877px;top:674px;width:246px;height:1px;background:#dcdcdc"></div>
<div class="t" style="left:877px;top:680px;font-size:13px;color:#1a1a1a;font-weight:normal;-webkit-text-stroke:0.3px #1a1a1a;letter-spacing:0px">HBHBD.</div>
<div class="a" style="left:862px;top:703px;width:276px;height:1.5px;background:#d0d0d0"></div>
<div class="t" style="left:877px;top:712px;font-size:13px;color:#1a1a1a;font-weight:normal;-webkit-text-stroke:0.3px #1a1a1a;letter-spacing:1.1px">Pningeil</div>
<div class="a" style="left:862px;top:731px;width:276px;height:1.5px;background:#d0d0d0"></div>
<div class="a" style="left:877px;top:742px;width:246px;height:28px;background:#fff;border:1px solid #d8d8d8"></div>
<div class="t" style="left:886px;top:749px;font-size:13px;color:#1a1a1a;font-weight:normal;-webkit-text-stroke:0.3px #1a1a1a;letter-spacing:0px">HBHH</div>
<div class="a" style="left:1100px;top:752px;width:3px;height:3px;background:#222"></div>
<!-- bottom icons -->
<div class="a" style="left:862px;top:809px;width:276px;height:6px;background:#585858"></div><div class="a" style="left:862px;top:808px;width:276px;height:1px;background:#444"></div>
<svg class="a" style="left:900px;top:780px" width="240" height="30">
<g fill="none" stroke="#9a9a9a" stroke-width="2"><rect x="17" y="9" width="8" height="10"/><path d="M29 9 L35 9 L35 19 L28 19 M30 5 L30 9"/></g>
<ellipse cx="71.5" cy="14" rx="8.5" ry="8" fill="none" stroke="#f0f0f0" stroke-width="3"/>
<path d="M108 22 L108 16 L114 16 L114 8 L120 7 L120 16 L124 16 L124 22 Z" fill="#ececec"/><path d="M111 19 L121 19" stroke="#4e4e4e" stroke-width="2"/>
<circle cx="160" cy="14.5" r="9" fill="#eeeeee"/><path d="M154 20 L166 8" stroke="#4e4e4e" stroke-width="2.5"/>
<rect x="196" y="6" width="18" height="17" fill="#e6e6e6"/><path d="M200 14 L210 11 M200 18 L210 18" stroke="#4e4e4e" stroke-width="2"/>
</svg>
<!-- document -->
<div class="a" style="left:235px;top:224px;width:516px;height:520px;background:#fff"></div>

<!-- DOC CONTENT -->
<div class="a" style="left:253px;top:241px;width:63px;height:65px;background:#323232"></div>
<svg class="a" style="left:252px;top:241px" width="64" height="65"><path d="M23 16 L30.4 23.3 L43.8 17.2 L37.3 30.6 L48.2 41.1 L32.8 39.5 L27.2 50.9 L23.9 37.1 L14.2 34.7 L23.1 29 Z" fill="#fff" stroke="#fff" stroke-width="1.5" stroke-linejoin="round"/></svg>
<div class="a" style="left:253px;top:315px;width:8px;height:8px;background:#f0a030"></div>
<div class="a" style="left:252px;top:647px;width:64px;height:81px;background:#fff;border:1px solid #aaa"></div>
<div class="a" style="left:253px;top:648px;width:46px;height:27px;background:#f7920a"></div>
<div class="a" style="left:253px;top:675px;width:62px;height:1px;background:#aaa"></div>
<svg class="a" style="left:0;top:0" width="1152" height="864">
<rect x="343.5" y="328" width="300" height="309.5" fill="none" stroke="#111" stroke-width="3.4"/>
<rect x="343.5" y="328" width="300" height="309.5" fill="none" stroke="#fff" stroke-opacity="0.75" stroke-width="1.2" stroke-dasharray="1.2 21" stroke-dashoffset="-14"/>
<rect x="339" y="323.5" width="9" height="9" fill="#111"/><rect x="639" y="323.5" width="9" height="9" fill="#111"/>
<rect x="339" y="633" width="9" height="9" fill="#111"/><rect x="639" y="633" width="9" height="9" fill="#111"/>
<path d="M419.2,478.0 C419.2,478.0 415.7,474.3 412.2,473.2 C408.7,472.1 402.9,471.0 398.3,471.1 C393.7,471.2 388.6,472.0 384.4,473.9 C380.2,475.8 376.3,478.7 373.3,482.2 C370.3,485.7 368.2,490.1 366.4,494.7 C364.5,499.3 363.6,505.1 362.2,510.0 C360.8,514.9 359.6,519.6 358.0,523.9 C356.4,528.2 354.6,533.1 352.4,535.8 C350.2,538.5 347.7,539.1 344.7,540.3 C341.7,541.5 334.5,542.8 334.5,542.8 C334.5,542.8 344.7,544.7 344.7,544.7 C344.7,544.7 322.5,547.0 322.5,547.0 C322.5,547.0 325.1,551.8 327.5,553.6 C329.9,555.5 333.9,557.1 337.1,558.1 C340.3,559.1 343.9,559.4 346.6,559.4 C349.4,559.4 351.4,559.0 353.6,558.1 C355.8,557.2 360.0,554.3 360.0,554.3 C360.0,554.3 345.4,565.7 345.4,565.7 C345.4,565.7 339.0,568.9 339.0,568.9 C339.0,568.9 345.7,570.0 348.6,569.6 C351.5,569.2 352.2,568.9 356.2,566.4 C360.2,563.9 372.7,554.9 372.7,554.9 C372.7,554.9 345.4,573.4 345.4,573.4 C345.4,573.4 339.0,575.9 339.0,575.9 C339.0,575.9 345.9,576.0 349.8,575.3 C353.7,574.6 358.4,573.5 362.6,571.5 C366.9,569.5 371.6,566.9 375.3,563.2 C379.0,559.5 382.7,553.5 384.8,549.2 C386.9,545.0 386.9,542.9 388.0,537.7 C389.1,532.6 390.4,524.1 391.4,518.3 C392.4,512.5 392.8,507.4 394.2,503.0 C395.6,498.6 397.2,494.5 399.7,491.9 C402.2,489.2 406.6,488.0 409.4,487.1 C412.2,486.2 416.4,486.4 416.4,486.4 C416.4,486.4 414.3,492.4 413.6,496.1 C412.9,499.8 412.0,503.1 412.2,508.6 C412.4,514.1 414.1,523.6 415.0,529.4 C415.9,535.2 418.3,539.1 417.8,543.3 C417.3,547.5 415.0,552.1 412.2,554.4 C409.4,556.7 403.6,555.8 401.1,557.2 C398.6,558.6 397.9,559.0 397.0,562.8 C396.1,566.6 396.3,575.5 395.6,580.0 C394.9,584.5 394.0,586.0 392.7,590.0 C391.4,594.0 389.4,600.2 388.0,604.0 C386.6,607.8 384.5,613.0 384.5,613.0 C384.5,613.0 385.9,619.7 386.5,623.0 C387.1,626.3 387.8,633.0 387.8,633.0 C387.8,633.0 408.1,633.0 408.1,633.0 C408.1,633.0 408.6,627.8 407.0,626.0 C405.4,624.2 400.4,624.2 398.4,622.0 C396.4,619.8 394.9,616.6 394.8,613.0 C394.7,609.4 396.0,605.0 397.5,600.5 C399.0,596.0 401.8,589.9 404.0,586.0 C406.2,582.1 407.2,579.5 410.5,577.0 C413.8,574.5 418.4,572.8 423.5,571.3 C428.6,569.8 441.3,568.1 441.3,568.1 C441.3,568.1 436.2,572.4 435.6,574.5 C435.1,576.6 436.2,577.2 438.0,581.0 C439.8,584.8 443.9,591.5 446.2,597.2 C448.5,602.9 449.6,610.7 451.8,615.0 C454.0,619.3 457.6,620.3 459.1,623.2 C460.6,626.1 460.7,632.6 460.7,632.6 C460.7,632.6 480.2,632.1 480.2,632.1 C480.2,632.1 478.9,627.1 477.0,624.8 C475.1,622.5 471.2,622.3 468.8,618.3 C466.4,614.2 464.5,606.2 462.4,600.5 C460.2,594.8 457.2,588.9 455.9,584.3 C454.5,579.7 453.5,576.1 454.3,572.9 C455.1,569.6 457.5,567.8 460.7,564.8 C463.9,561.8 469.6,558.9 473.7,555.1 C477.8,551.3 482.8,546.3 485.0,542.1 C487.2,537.9 486.7,530.0 486.7,530.0 C486.7,530.0 487.4,529.0 492.5,528.2 C497.6,527.4 509.0,526.8 517.2,525.0 C525.5,523.2 534.3,519.9 542.0,517.5 C549.7,515.1 556.7,513.2 563.4,510.9 C570.1,508.6 576.4,505.5 582.0,503.7 C587.6,501.9 593.4,500.6 597.3,499.8 C601.2,499.0 605.6,498.6 605.6,498.6 C605.6,498.6 603.8,507.3 602.4,511.3 C601.0,515.3 599.0,520.2 597.3,522.7 C595.6,525.2 594.3,525.8 592.2,526.6 C590.1,527.5 586.5,526.5 584.6,527.8 C582.7,529.1 580.7,534.2 580.7,534.2 C580.7,534.2 580.1,541.8 580.1,541.8 C580.1,541.8 587.4,541.2 590.9,540.6 C594.4,540.0 598.1,539.5 601.1,538.0 C604.1,536.5 607.0,534.2 608.7,531.7 C610.4,529.2 610.3,526.1 611.3,522.7 C612.3,519.3 613.4,514.9 614.5,511.3 C615.6,507.7 616.8,504.5 617.7,501.1 C618.7,497.7 620.2,490.9 620.2,490.9 C620.2,490.9 621.5,491.0 621.5,491.0 C621.5,491.0 622.7,496.5 623.4,498.6 C624.1,500.7 626.0,501.6 625.9,503.7 C625.8,505.8 622.7,511.3 622.7,511.3 C622.7,511.3 632.3,522.1 632.3,522.1 C632.3,522.1 634.6,515.0 635.5,511.3 C636.4,507.6 637.2,502.8 637.4,499.8 C637.6,496.8 638.2,496.7 636.8,493.5 C635.4,490.3 631.5,484.7 629.1,480.7 C626.8,476.7 624.6,472.1 622.7,469.3 C620.8,466.5 619.6,464.9 617.7,463.6 C615.8,462.3 614.3,461.3 611.3,461.6 C608.3,461.9 603.2,464.3 599.8,465.5 C596.4,466.7 590.9,468.6 590.9,468.6 C590.9,468.6 589.2,468.1 589.0,465.5 C588.8,462.9 589.9,456.9 589.6,452.7 C589.3,448.4 587.6,444.1 587.1,440.0 C586.6,435.9 586.3,432.3 586.4,428.0 C586.5,423.7 586.8,418.2 587.6,414.4 C588.4,410.6 591.0,405.2 591.0,405.2 C591.0,405.2 596.2,406.2 599.0,407.5 C601.8,408.8 605.2,411.2 607.9,412.8 C610.6,414.4 612.7,415.5 615.0,416.8 C617.3,418.1 619.5,420.1 621.7,420.7 C623.9,421.3 626.1,421.3 628.0,420.5 C629.9,419.7 632.1,417.6 633.0,416.0 C633.9,414.4 634.1,413.6 633.5,410.8 C632.9,408.0 631.5,404.2 629.5,399.0 C627.5,393.8 624.1,383.9 621.7,379.4 C619.3,374.9 616.8,373.9 615.0,372.0 C613.2,370.1 610.7,368.0 610.7,368.0 C610.7,368.0 611.3,352.5 611.3,352.5 C611.3,352.5 604.4,365.8 604.4,365.8 C604.4,365.8 600.9,350.2 600.9,350.2 C600.9,350.2 593.4,362.0 593.4,362.0 C593.4,362.0 585.0,357.8 581.0,356.5 C577.0,355.2 569.1,354.3 569.1,354.3 C569.1,354.3 573.7,362.4 573.7,362.4 C573.7,362.4 563.4,361.9 558.0,363.0 C552.6,364.1 541.3,368.7 541.3,368.7 C541.3,368.7 549.4,375.7 549.4,375.7 C549.4,375.7 539.3,378.9 535.0,381.0 C530.7,383.1 523.4,388.4 523.4,388.4 C523.4,388.4 534.4,392.5 534.4,392.5 C534.4,392.5 522.2,397.2 518.0,400.0 C513.8,402.8 508.9,409.2 508.9,409.2 C508.9,409.2 523.9,413.3 523.9,413.3 C523.9,413.3 514.8,417.9 512.0,420.0 C509.2,422.1 507.2,426.0 507.2,426.0 C507.2,426.0 518.1,427.2 518.1,427.2 C518.1,427.2 510.8,428.8 508.0,429.5 C505.2,430.2 501.4,431.2 501.4,431.2 C501.4,431.2 510.2,432.0 514.0,432.5 C517.8,433.0 524.0,434.1 524.0,434.1 C524.0,434.1 523.6,438.5 522.2,440.0 C520.8,441.5 519.5,441.1 515.6,443.3 C511.7,445.5 505.1,450.3 499.0,453.2 C492.9,456.1 485.9,459.0 479.3,460.6 C472.7,462.2 466.1,462.4 459.5,463.1 C452.9,463.8 445.8,463.1 439.7,464.7 C433.6,466.3 423.2,473.0 423.2,473.0 C423.2,473.0 419.2,478.0 419.2,478.0Z" fill="#0a0a0a"/>
<g fill="none" stroke="#fff" stroke-width="1.5" stroke-linecap="round">
<path d="M524,434.5 C530,425 536,416 541.3,409.8 C548,398 553,390 559.8,383.2 C566,377 571,374 576,371.6 C582,369 587,367 592,366.4"/>
<path d="M586.4,387.8 C586,392 586.5,397 587.6,399 C588.5,402 590,404 591,405.2"/>
<path d="M540.3,442.5 C552,446 561,450 568.3,454.8 C575,459 578,464 579.9,469.7 C581.5,474 582.4,478 582.4,481.2"/>
<path d="M570,484.5 C572,483.5 574,482.8 576.6,482.6 C585,482.2 592,482 606,482.5"/>
<path d="M476,501 C475,505 474,510 472.7,514.2 C470,522 467,528 464.4,532.4 C458,544 450,555 441.3,566"/>
<path d="M469.4,527.4 C475,528 481,529 487.5,529.9"/>
<path d="M361,553.5 Q355,561 346,566.5" stroke-width="1.8"/>
<path d="M374,554.5 Q363,567 347,573" stroke-width="1.8"/>
<path d="M351.5,543 Q348.5,545.5 345.5,546.5" stroke-width="1.4"/>
<path d="M418.5,478.5 Q417,482 416,486" stroke-width="1.4"/>
<path d="M542,494.4 C544,499 546,503 548.5,506 C551,509 554,511 556.8,511.7"/>
</g>
<ellipse cx="609.8" cy="382.5" rx="2.2" ry="1.8" fill="#fff"/>
<g transform="translate(259,684) scale(0.146) translate(-322,-351)">
<path d="M419.2,478.0 C419.2,478.0 415.7,474.3 412.2,473.2 C408.7,472.1 402.9,471.0 398.3,471.1 C393.7,471.2 388.6,472.0 384.4,473.9 C380.2,475.8 376.3,478.7 373.3,482.2 C370.3,485.7 368.2,490.1 366.4,494.7 C364.5,499.3 363.6,505.1 362.2,510.0 C360.8,514.9 359.6,519.6 358.0,523.9 C356.4,528.2 354.6,533.1 352.4,535.8 C350.2,538.5 347.7,539.1 344.7,540.3 C341.7,541.5 334.5,542.8 334.5,542.8 C334.5,542.8 344.7,544.7 344.7,544.7 C344.7,544.7 322.5,547.0 322.5,547.0 C322.5,547.0 325.1,551.8 327.5,553.6 C329.9,555.5 333.9,557.1 337.1,558.1 C340.3,559.1 343.9,559.4 346.6,559.4 C349.4,559.4 351.4,559.0 353.6,558.1 C355.8,557.2 360.0,554.3 360.0,554.3 C360.0,554.3 345.4,565.7 345.4,565.7 C345.4,565.7 339.0,568.9 339.0,568.9 C339.0,568.9 345.7,570.0 348.6,569.6 C351.5,569.2 352.2,568.9 356.2,566.4 C360.2,563.9 372.7,554.9 372.7,554.9 C372.7,554.9 345.4,573.4 345.4,573.4 C345.4,573.4 339.0,575.9 339.0,575.9 C339.0,575.9 345.9,576.0 349.8,575.3 C353.7,574.6 358.4,573.5 362.6,571.5 C366.9,569.5 371.6,566.9 375.3,563.2 C379.0,559.5 382.7,553.5 384.8,549.2 C386.9,545.0 386.9,542.9 388.0,537.7 C389.1,532.6 390.4,524.1 391.4,518.3 C392.4,512.5 392.8,507.4 394.2,503.0 C395.6,498.6 397.2,494.5 399.7,491.9 C402.2,489.2 406.6,488.0 409.4,487.1 C412.2,486.2 416.4,486.4 416.4,486.4 C416.4,486.4 414.3,492.4 413.6,496.1 C412.9,499.8 412.0,503.1 412.2,508.6 C412.4,514.1 414.1,523.6 415.0,529.4 C415.9,535.2 418.3,539.1 417.8,543.3 C417.3,547.5 415.0,552.1 412.2,554.4 C409.4,556.7 403.6,555.8 401.1,557.2 C398.6,558.6 397.9,559.0 397.0,562.8 C396.1,566.6 396.3,575.5 395.6,580.0 C394.9,584.5 394.0,586.0 392.7,590.0 C391.4,594.0 389.4,600.2 388.0,604.0 C386.6,607.8 384.5,613.0 384.5,613.0 C384.5,613.0 385.9,619.7 386.5,623.0 C387.1,626.3 387.8,633.0 387.8,633.0 C387.8,633.0 408.1,633.0 408.1,633.0 C408.1,633.0 408.6,627.8 407.0,626.0 C405.4,624.2 400.4,624.2 398.4,622.0 C396.4,619.8 394.9,616.6 394.8,613.0 C394.7,609.4 396.0,605.0 397.5,600.5 C399.0,596.0 401.8,589.9 404.0,586.0 C406.2,582.1 407.2,579.5 410.5,577.0 C413.8,574.5 418.4,572.8 423.5,571.3 C428.6,569.8 441.3,568.1 441.3,568.1 C441.3,568.1 436.2,572.4 435.6,574.5 C435.1,576.6 436.2,577.2 438.0,581.0 C439.8,584.8 443.9,591.5 446.2,597.2 C448.5,602.9 449.6,610.7 451.8,615.0 C454.0,619.3 457.6,620.3 459.1,623.2 C460.6,626.1 460.7,632.6 460.7,632.6 C460.7,632.6 480.2,632.1 480.2,632.1 C480.2,632.1 478.9,627.1 477.0,624.8 C475.1,622.5 471.2,622.3 468.8,618.3 C466.4,614.2 464.5,606.2 462.4,600.5 C460.2,594.8 457.2,588.9 455.9,584.3 C454.5,579.7 453.5,576.1 454.3,572.9 C455.1,569.6 457.5,567.8 460.7,564.8 C463.9,561.8 469.6,558.9 473.7,555.1 C477.8,551.3 482.8,546.3 485.0,542.1 C487.2,537.9 486.7,530.0 486.7,530.0 C486.7,530.0 487.4,529.0 492.5,528.2 C497.6,527.4 509.0,526.8 517.2,525.0 C525.5,523.2 534.3,519.9 542.0,517.5 C549.7,515.1 556.7,513.2 563.4,510.9 C570.1,508.6 576.4,505.5 582.0,503.7 C587.6,501.9 593.4,500.6 597.3,499.8 C601.2,499.0 605.6,498.6 605.6,498.6 C605.6,498.6 603.8,507.3 602.4,511.3 C601.0,515.3 599.0,520.2 597.3,522.7 C595.6,525.2 594.3,525.8 592.2,526.6 C590.1,527.5 586.5,526.5 584.6,527.8 C582.7,529.1 580.7,534.2 580.7,534.2 C580.7,534.2 580.1,541.8 580.1,541.8 C580.1,541.8 587.4,541.2 590.9,540.6 C594.4,540.0 598.1,539.5 601.1,538.0 C604.1,536.5 607.0,534.2 608.7,531.7 C610.4,529.2 610.3,526.1 611.3,522.7 C612.3,519.3 613.4,514.9 614.5,511.3 C615.6,507.7 616.8,504.5 617.7,501.1 C618.7,497.7 620.2,490.9 620.2,490.9 C620.2,490.9 621.5,491.0 621.5,491.0 C621.5,491.0 622.7,496.5 623.4,498.6 C624.1,500.7 626.0,501.6 625.9,503.7 C625.8,505.8 622.7,511.3 622.7,511.3 C622.7,511.3 632.3,522.1 632.3,522.1 C632.3,522.1 634.6,515.0 635.5,511.3 C636.4,507.6 637.2,502.8 637.4,499.8 C637.6,496.8 638.2,496.7 636.8,493.5 C635.4,490.3 631.5,484.7 629.1,480.7 C626.8,476.7 624.6,472.1 622.7,469.3 C620.8,466.5 619.6,464.9 617.7,463.6 C615.8,462.3 614.3,461.3 611.3,461.6 C608.3,461.9 603.2,464.3 599.8,465.5 C596.4,466.7 590.9,468.6 590.9,468.6 C590.9,468.6 589.2,468.1 589.0,465.5 C588.8,462.9 589.9,456.9 589.6,452.7 C589.3,448.4 587.6,444.1 587.1,440.0 C586.6,435.9 586.3,432.3 586.4,428.0 C586.5,423.7 586.8,418.2 587.6,414.4 C588.4,410.6 591.0,405.2 591.0,405.2 C591.0,405.2 596.2,406.2 599.0,407.5 C601.8,408.8 605.2,411.2 607.9,412.8 C610.6,414.4 612.7,415.5 615.0,416.8 C617.3,418.1 619.5,420.1 621.7,420.7 C623.9,421.3 626.1,421.3 628.0,420.5 C629.9,419.7 632.1,417.6 633.0,416.0 C633.9,414.4 634.1,413.6 633.5,410.8 C632.9,408.0 631.5,404.2 629.5,399.0 C627.5,393.8 624.1,383.9 621.7,379.4 C619.3,374.9 616.8,373.9 615.0,372.0 C613.2,370.1 610.7,368.0 610.7,368.0 C610.7,368.0 611.3,352.5 611.3,352.5 C611.3,352.5 604.4,365.8 604.4,365.8 C604.4,365.8 600.9,350.2 600.9,350.2 C600.9,350.2 593.4,362.0 593.4,362.0 C593.4,362.0 585.0,357.8 581.0,356.5 C577.0,355.2 569.1,354.3 569.1,354.3 C569.1,354.3 573.7,362.4 573.7,362.4 C573.7,362.4 563.4,361.9 558.0,363.0 C552.6,364.1 541.3,368.7 541.3,368.7 C541.3,368.7 549.4,375.7 549.4,375.7 C549.4,375.7 539.3,378.9 535.0,381.0 C530.7,383.1 523.4,388.4 523.4,388.4 C523.4,388.4 534.4,392.5 534.4,392.5 C534.4,392.5 522.2,397.2 518.0,400.0 C513.8,402.8 508.9,409.2 508.9,409.2 C508.9,409.2 523.9,413.3 523.9,413.3 C523.9,413.3 514.8,417.9 512.0,420.0 C509.2,422.1 507.2,426.0 507.2,426.0 C507.2,426.0 518.1,427.2 518.1,427.2 C518.1,427.2 510.8,428.8 508.0,429.5 C505.2,430.2 501.4,431.2 501.4,431.2 C501.4,431.2 510.2,432.0 514.0,432.5 C517.8,433.0 524.0,434.1 524.0,434.1 C524.0,434.1 523.6,438.5 522.2,440.0 C520.8,441.5 519.5,441.1 515.6,443.3 C511.7,445.5 505.1,450.3 499.0,453.2 C492.9,456.1 485.9,459.0 479.3,460.6 C472.7,462.2 466.1,462.4 459.5,463.1 C452.9,463.8 445.8,463.1 439.7,464.7 C433.6,466.3 423.2,473.0 423.2,473.0 C423.2,473.0 419.2,478.0 419.2,478.0Z" fill="#0a0a0a"/>
</g>
</svg>
<!-- taskbar -->
<div class="a" style="left:0;top:815px;width:1152px;height:49px;background:#171513"></div>
<div class="a" style="left:57px;top:819px;width:254px;height:45px;background:#efefef"></div>

<!-- TASKBAR CONTENT -->
<div class="a" style="left:18px;top:829px;width:24px;height:23px;background:#1e6ee8;border-radius:3px"></div>
<svg class="a" style="left:18px;top:829px" width="24" height="23"><path d="M6 15 Q5 8 12 7 Q18 7 18 12 Q18 17 12 17 Q8 17 8 14" fill="none" stroke="#fff" stroke-width="2.5"/><path d="M13 8 L11 13" stroke="#fff" stroke-width="2"/></svg>
<svg class="a" style="left:70px;top:827px" width="30" height="30">
<g transform="rotate(-45 14 14)">
<circle cx="14" cy="14" r="8.5" fill="none" stroke="#f7a21b" stroke-width="7" stroke-dasharray="13.4 40"/>
<circle cx="14" cy="14" r="8.5" fill="none" stroke="#20c4a0" stroke-width="7" stroke-dasharray="0 13.35 13.4 26.7"/>
<circle cx="14" cy="14" r="8.5" fill="none" stroke="#3cc040" stroke-width="7" stroke-dasharray="0 26.7 13.4 13.35"/>
<circle cx="14" cy="14" r="8.5" fill="none" stroke="#f04a22" stroke-width="7" stroke-dasharray="0 40.05 13.4 0"/>
</g>
</svg>
<div class="t" style="left:108px;top:833px;font-size:15px;color:#1a1a1a;font-weight:normal;-webkit-text-stroke:0.5px #1a1a1a;letter-spacing:-0.3px">Elcrv leene</div>
<svg class="a" style="left:278px;top:831px" width="22" height="22"><circle cx="10" cy="10" r="6.5" fill="none" stroke="#333" stroke-width="2.2"/><path d="M15 15 L19 19" stroke="#333" stroke-width="2.5"/></svg>
<div class="a" style="left:324px;top:816px;width:1px;height:12px;background:#ccc"></div>
<div class="a" style="left:341px;top:826px;width:27px;height:27px;background:#1ed985;border-radius:5px"></div>
<svg class="a" style="left:341px;top:826px" width="27" height="27"><path d="M6 8 L13 9 L14 20 L6 19 Z M14 9 L21 8 L21 19 L14 20 Z" fill="#eafff4"/><path d="M14 9 L13.5 18" stroke="#1ed985" stroke-width="1.5"/></svg>
<div class="a" style="left:387px;top:818px;width:60px;height:46px;background:#37424d"></div>
<div class="a" style="left:324px;top:860px;width:123px;height:4px;background:#1ec0e6"></div>
<svg class="a" style="left:400px;top:825px" width="32" height="32">
<circle cx="16" cy="16" r="13" fill="#f5d21a"/>
<path d="M16 3 A13 13 0 0 0 4 21 L12 21 L12 10 L24 6 A13 13 0 0 0 16 3 Z" fill="#f07a22"/>
<rect x="10" y="10" width="14" height="11" fill="#e8305a"/>
<path d="M4 20 Q6 26 12 28 L24 24 L24 19 L10 19 Z" fill="#8a2ee0"/>
<path d="M4 21 Q6 26 10 28 L12 22 Z" fill="#1eb8e8"/>
<rect x="13" y="12" width="7" height="5" fill="#fff" opacity="0.85"/>
</svg>
<svg class="a" style="left:830px;top:830px" width="20" height="22"><path d="M12 4 L6 11 L12 18" fill="none" stroke="#cfcfcf" stroke-width="2.5"/></svg>
<div class="a" style="left:871px;top:830px;width:1px;height:23px;background:#555"></div>
<svg class="a" style="left:886px;top:831px" width="22" height="22"><path d="M3 2 L19 10.5 L3 19 Z" fill="#fafafa"/></svg>
<svg class="a" style="left:923px;top:832px" width="22" height="20"><path d="M9 1 L19 1 L19 19 L8 19 Q2 16 2 10 Q2 3 9 1 Z" fill="#f5421e"/><path d="M11 1 L19 1 L19 19 L12 19 Z" fill="#f7a01a"/></svg>
<svg class="a" style="left:955px;top:832px" width="24" height="21"><rect x="1" y="1" width="21" height="19" rx="5" fill="#3bd0ff"/><path d="M1 6 Q1 1 6 1 L12 1 L12 11 L1 14 Z" fill="#44dd44"/><path d="M12 1 L17 1 Q22 1 22 6 L22 11 L12 11 Z" fill="#b040e8"/><path d="M12 11 L22 11 L22 15 Q22 20 17 20 L12 20 Z" fill="#f0f0ff"/></svg>
<svg class="a" style="left:990px;top:834px" width="36" height="16"><path d="M2 3 L14 3 M8 3 L8 13 L14 13 M19 2 L19 13 L32 13 L32 7 L19 7" fill="none" stroke="#f2f2f2" stroke-width="2.2"/></svg>
<svg class="a" style="left:1038px;top:825px" width="46" height="36"><path d="M12 8 L12 3 L30 3 L30 8 M3 8 L43 8 M5 8 L5 26 L13 26 Q17 29 21 26 L28 26 L28 32 M36 20 L43 20 L43 32 M3 18 L26 18 L26 20 L36 20" fill="none" stroke="#fafafa" stroke-width="2.2"/></svg>
<div class="a" style="left:1106px;top:830px;width:23px;height:22px;border:2.5px solid #fafafa"></div>
</body></html>
